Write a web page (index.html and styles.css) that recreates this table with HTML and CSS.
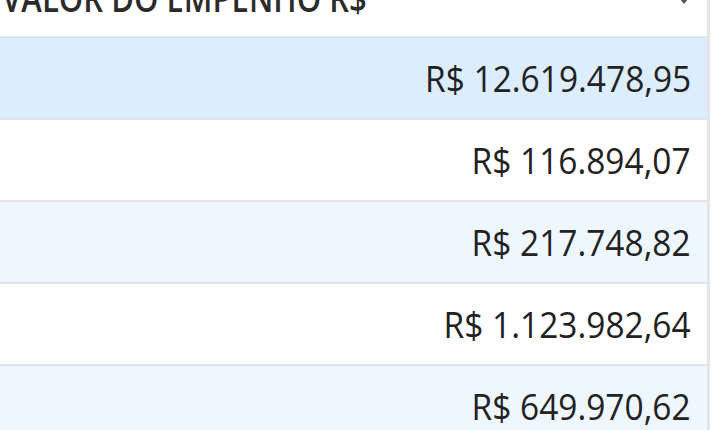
FILE: index.html
```html
<!DOCTYPE html>
<html lang="pt-BR">
<head>
<meta charset="utf-8">
<title>Valor do empenho</title>
<link rel="stylesheet" href="styles.css">
</head>
<body>
<div class="table">
  <div class="head">
    <span class="head-label">VALOR DO EMPENHO R$</span>
    <span class="sort" aria-hidden="true"></span>
  </div>
  <div class="row row-active"><span class="val">R$ 12.619.478,95</span></div>
  <div class="row"><span class="val">R$ 116.894,07</span></div>
  <div class="row row-alt"><span class="val">R$ 217.748,82</span></div>
  <div class="row"><span class="val">R$ 1.123.982,64</span></div>
  <div class="row row-alt"><span class="val">R$ 649.970,62</span></div>
</div>
</body>
</html>
```
FILE: styles.css
```css
html, body {
  margin: 0;
  padding: 0;
  background: #ffffff;
}
body {
  font-family: "Open Sans", "Liberation Sans", sans-serif;
  color: #2a2a2a;
  width: 720px;
  height: 430px;
  overflow: hidden;
}
.table {
  width: 707px;
  margin-top: -20px;
  border-right: 3px solid #e3e5e9;
  background: #ffffff;
}
.head {
  display: flex;
  justify-content: space-between;
  align-items: flex-start;
  height: 56px;
  padding: 0 18px 0 2px;
  border-bottom: 2px solid #e1e4e8;
}
.head-label {
  font-size: 37px;
  font-weight: 600;
  line-height: 36px;
  color: #2b2b2b;
  white-space: nowrap;
  transform: scaleX(0.84);
  transform-origin: left center;
}
.sort {
  width: 0;
  height: 0;
  margin-top: 18px;
  border-left: 5px solid transparent;
  border-right: 5px solid transparent;
  border-top: 6px solid #55575c;
}
.row {
  display: flex;
  align-items: center;
  justify-content: flex-end;
  height: 80px;
  padding-right: 16px;
  border-bottom: 2px solid #e1e4e8;
}
.row-active {
  background: #dcedfd;
}
.row-alt {
  background: #eff7fe;
}
.val {
  font-size: 36px;
  white-space: nowrap;
  color: #222222;
  transform: scaleX(0.93);
  transform-origin: right center;
}
```
